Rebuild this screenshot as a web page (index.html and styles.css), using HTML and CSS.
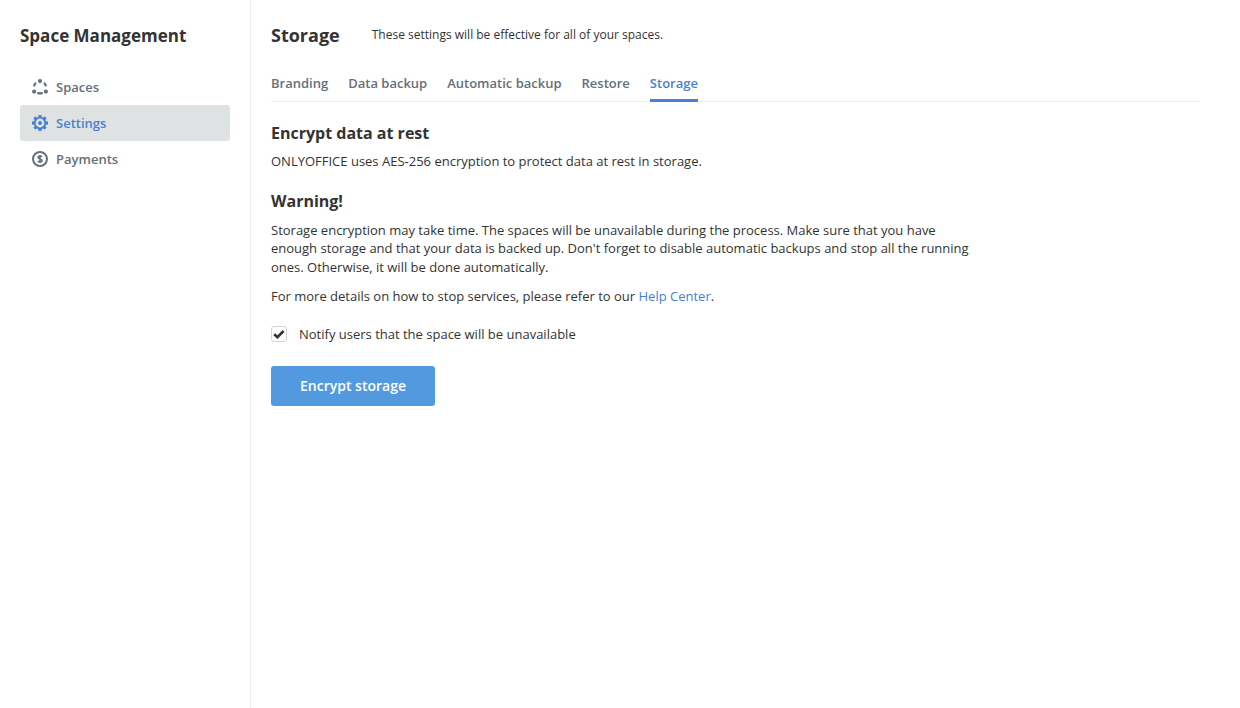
FILE: index.html
```html
<!DOCTYPE html>
<html lang="en">
<head>
<meta charset="utf-8">
<title>Space Management</title>
<link rel="stylesheet" href="styles.css">
</head>
<body>
<div class="app">
  <aside class="sidebar">
    <h2 class="side-title">Space Management</h2>
    <nav class="side-nav">
      <a class="side-item">
        <svg class="side-icon" viewBox="0 0 16 16" width="16" height="16" fill="#657077">
          <circle cx="8" cy="2.1" r="2.1"/><circle cx="2.1" cy="12.6" r="2.1"/><circle cx="13.9" cy="12.6" r="2.1"/>
          <path d="M3.2 3 4.8 4.6C3.9 5.4 3.4 6.4 3.2 7.6L1 7.2C1.2 5.6 2 4.1 3.2 3ZM12.8 3 11.2 4.6C12.1 5.4 12.6 6.4 12.8 7.6L15 7.2C14.8 5.6 14 4.1 12.8 3ZM5.7 12.8C7.2 13.4 8.8 13.4 10.3 12.8L11 15C9 15.7 7 15.7 5 15Z"/>
        </svg>
        <span>Spaces</span>
      </a>
      <a class="side-item active">
        <svg class="side-icon" viewBox="0 0 16 16" width="16" height="16">
          <path fill="#4781d1" fill-rule="evenodd" d="M6.6 0H9.4L9.8 2.1 10.9 2.6 12.7 1.4 14.6 3.3 13.4 5.1 13.9 6.2 16 6.6V9.4L13.9 9.8 13.4 10.9 14.6 12.7 12.7 14.6 10.9 13.4 9.8 13.9 9.4 16H6.6L6.2 13.9 5.1 13.4 3.3 14.6 1.4 12.7 2.6 10.9 2.1 9.8 0 9.4V6.6L2.1 6.2 2.6 5.1 1.4 3.3 3.3 1.4 5.1 2.6 6.2 2.1ZM8 3.6A4.4 4.4 0 1 0 8 12.4 4.4 4.4 0 1 0 8 3.6ZM8 6A2 2 0 1 1 8 10 2 2 0 1 1 8 6Z"/>
        </svg>
        <span>Settings</span>
      </a>
      <a class="side-item">
        <svg class="side-icon" viewBox="0 0 16 16" width="16" height="16">
          <circle cx="8" cy="8" r="7" fill="none" stroke="#657077" stroke-width="2"/>
          <path d="M10 5.9C9.6 5.2 8.8 5 8 5 7 5 6.1 5.5 6.1 6.4 6.1 8.4 10 7.5 10 9.6 10 10.5 9 11 8 11 7.1 11 6.3 10.6 6 9.9M8 4V12" fill="none" stroke="#657077" stroke-width="1.6"/>
        </svg>
        <span>Payments</span>
      </a>
    </nav>
  </aside>
  <main class="content">
    <header class="page-head">
      <h1 class="page-title">Storage</h1>
      <p class="page-note">These settings will be effective for all of your spaces.</p>
    </header>
    <div class="tabs">
      <a class="tab">Branding</a>
      <a class="tab">Data backup</a>
      <a class="tab">Automatic backup</a>
      <a class="tab">Restore</a>
      <a class="tab current">Storage</a>
    </div>
    <h3 class="section-title first">Encrypt data at rest</h3>
    <p class="text intro">ONLYOFFICE uses AES-256 encryption to protect data at rest in storage.</p>
    <h3 class="section-title warning">Warning!</h3>
    <p class="text para">Storage encryption may take time. The spaces will be unavailable during the process. Make sure that you have enough storage and that your data is backed up. Don't forget to disable automatic backups and stop all the running ones. Otherwise, it will be done automatically.</p>
    <p class="text more">For more details on how to stop services, please refer to our <a class="link">Help Center</a>.</p>
    <label class="check-row">
      <span class="check-box">
        <svg viewBox="0 0 16 16" width="16" height="16"><path d="M3.2 8.2 6.4 11.2 12.6 5" fill="none" stroke="#333" stroke-width="2.6"/></svg>
      </span>
      <span class="text">Notify users that the space will be unavailable</span>
    </label>
    <button class="btn" type="button">Encrypt storage</button>
  </main>
</div>
</body>
</html>
```
FILE: styles.css
```css
* { box-sizing: border-box; }
html, body { margin: 0; height: 100%; }
body {
  background: #fff;
  color: #333;
  font-family: "Open Sans", sans-serif;
  overflow: hidden;
}
.app { display: flex; height: 708px; }
.sidebar {
  width: 251px;
  flex: none;
  border-right: 1px solid #eceef1;
  padding: 24px 20px 0;
}
.side-title {
  margin: 0 0 22px;
  font-size: 17px;
  line-height: 23px;
  font-weight: 700;
}
.side-nav { display: flex; flex-direction: column; width: 210px; }
.side-item {
  display: flex;
  align-items: center;
  gap: 8px;
  height: 36px;
  padding-left: 12px;
  border-radius: 3px;
  font-size: 13px;
  font-weight: 600;
  color: #657077;
}
.side-icon { flex: none; }
.side-item.active { background: #dfe2e3; color: #4781d1; }
.content { flex: 1; padding: 24px 40px 0 20px; }
.page-head { display: flex; align-items: center; gap: 32px; height: 23px; }
.page-title { margin: 0; font-size: 18px; line-height: 23px; font-weight: 700; }
.page-note { margin: 0; font-size: 12px; line-height: 20px; position: relative; top: -1px; }
.tabs {
  display: flex;
  gap: 20px;
  margin-top: 24px;
  height: 31px;
  border-bottom: 1px solid #eceef1;
}
.tab {
  font-size: 13px;
  line-height: 24px;
  font-weight: 600;
  color: #657077;
  height: 31px;
}
.tab.current {
  color: #4781d1;
  border-bottom: 3px solid #4781d1;
  border-radius: 2px 2px 0 0;
}
.section-title { margin: 0; font-size: 16px; line-height: 22px; font-weight: 600; }
.section-title.first { margin-top: 20px; font-weight: 700; }
.section-title.warning { margin-top: 19px; font-weight: 700; }
.text { font-size: 13px; line-height: 18.5px; margin: 0; color: #333; }
.intro { margin-top: 7px; line-height: 20px; }
.para { margin-top: 8.6px; max-width: 700px; }
.more { margin-top: 10px; line-height: 20px; }
.link { color: #4781d1; }
.check-row { display: flex; align-items: center; gap: 12px; margin-top: 18px; height: 20px; }
.check-box {
  width: 16px;
  height: 16px;
  border: 1px solid #d0d5da;
  border-radius: 3px;
  display: flex;
  align-items: center;
  justify-content: center;
  flex: none;
}
.check-box svg { flex: none; }
.btn {
  display: block;
  margin-top: 22px;
  width: 164px;
  height: 40px;
  border: 0;
  border-radius: 3px;
  padding: 0 0 2px;
  background: #5299e0;
  color: #fff;
  font-family: "Open Sans", sans-serif;
  font-size: 14px;
  font-weight: 600;
}
```
